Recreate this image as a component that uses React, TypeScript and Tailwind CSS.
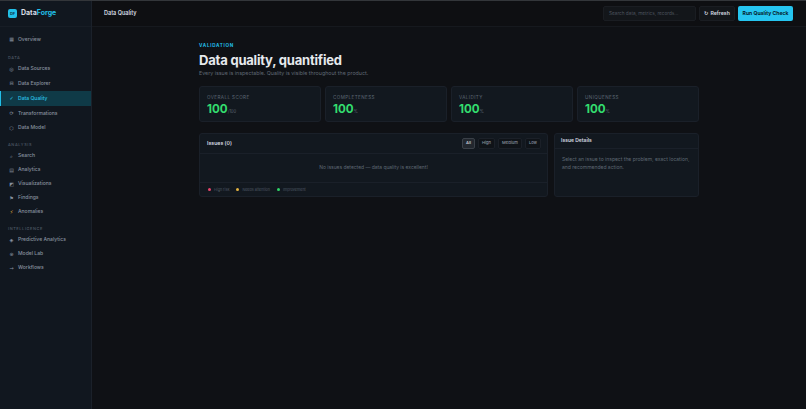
import React from 'react';

const inter = { fontFamily: 'Inter, "Noto Sans", sans-serif' };

interface NavItem {
  label: string;
  icon: string;
  active?: boolean;
  iconClass?: string;
}

const overview: NavItem[] = [{ label: 'Overview', icon: '▦' }];
const data: NavItem[] = [
  { label: 'Data Sources', icon: '◎' },
  { label: 'Data Explorer', icon: '⊟' },
  { label: 'Data Quality', icon: '✓', active: true },
  { label: 'Transformations', icon: '⟳' },
  { label: 'Data Model', icon: '⬡' },
];
const analysis: NavItem[] = [
  { label: 'Search', icon: '⌕' },
  { label: 'Analytics', icon: '▤' },
  { label: 'Visualizations', icon: '◩' },
  { label: 'Findings', icon: '⚑' },
  { label: 'Anomalies', icon: '⚡', iconClass: 'text-[#e3b341]' },
];
const intelligence: NavItem[] = [
  { label: 'Predictive Analytics', icon: '◈' },
  { label: 'Model Lab', icon: '⊛' },
  { label: 'Workflows', icon: '→' },
];

function NavRow({ item, tight }: { item: NavItem; tight?: boolean }) {
  return (
    <div
      className={`flex items-center gap-[4px] pl-[8px] text-[5.05px] font-medium border-l ${tight ? 'h-[14px]' : 'h-[14.75px]'} ${
        item.active ? 'border-[#22bfe8] bg-[#0f3a47] text-[#2cc3e8]' : 'border-transparent text-[#87919f]'
      }`}
    >
      <span className={`w-[5px] text-center text-[5px] leading-none ${item.iconClass ?? ''}`} style={{ fontFamily: '"DejaVu Sans", sans-serif' }}>
        {item.icon}
      </span>
      <span>{item.label}</span>
    </div>
  );
}

function SectionLabel({ children }: { children: React.ReactNode }) {
  return <div className="h-[11px] pl-[8px] pt-[4px] text-[3.9px] font-medium leading-[5px] tracking-[0.6px] text-[#4f5966]">{children}</div>;
}

function Stat({ label, unit }: { label: string; unit: string }) {
  return (
    <div className="h-[36px] flex-1 rounded-[3px] border border-[#1a2029] bg-[#12181f] px-[7px] pt-[8px]">
      <div className="text-[4.6px] leading-[6px] tracking-[0.4px] text-[#5c6673]">{label}</div>
      <div className="mt-[1px] flex items-baseline text-[#33dd6e]">
        <span className="text-[11.6px] font-bold leading-[14px]">100</span>
        <span className="text-[4.2px] text-[#5c6673]">{unit}</span>
      </div>
    </div>
  );
}

function Filter({ label, active }: { label: string; active?: boolean }) {
  return (
    <span
      className={`flex h-[11px] items-center rounded-[2px] border px-[3px] text-[4.1px] font-medium ${
        active ? 'border-[#3a4048] bg-[#22272e] text-[#d5dae0]' : 'border-[#1b2028] bg-[#0f1318] text-[#8a94a0]'
      }`}
    >
      {label}
    </span>
  );
}

function Legend({ color, label }: { color: string; label: string }) {
  return (
    <span className="flex items-center gap-[3px]">
      <span className={`h-[3px] w-[3px] rounded-full ${color}`} />
      <span>{label}</span>
    </span>
  );
}

export default function App() {
  return (
    <div className="flex h-[409px] w-[806px] flex-col overflow-hidden bg-[#0f1115]" style={inter}>
      <div className="h-px shrink-0 bg-[#33363a]" />
      <div className="flex min-h-0 flex-1">
        {/* Sidebar */}
        <aside className="w-[92px] shrink-0 border-r border-[#1b212a] bg-[#11171f]">
          <div className="flex h-[26px] items-center gap-[4px] border-b border-[#171d25] pl-[8px]">
            <span className="flex h-[9px] w-[9px] items-center justify-center rounded-[2px] bg-[#22bfe8] text-[4px] font-bold text-[#0d3a48]">DF</span>
            <span className="text-[7px] font-bold text-[#d9dee4]">
              Data<span className="text-[#22bfe8]">Forge</span>
            </span>
          </div>
          <div className="pt-[5.5px]">
            {overview.map((i) => <NavRow key={i.label} item={i} />)}
          </div>
          <div className="pt-[3.5px]">
            <SectionLabel>DATA</SectionLabel>
            {data.map((i) => <NavRow key={i.label} item={i} />)}
          </div>
          <div className="pt-[2.6px]">
            <SectionLabel>ANALYSIS</SectionLabel>
            {analysis.map((i) => <NavRow key={i.label} item={i} tight />)}
          </div>
          <div className="pt-[3px]">
            <SectionLabel>INTELLIGENCE</SectionLabel>
            {intelligence.map((i) => <NavRow key={i.label} item={i} tight />)}
          </div>
        </aside>

        <div className="flex min-w-0 flex-1 flex-col">
          {/* Top bar */}
          <header className="flex h-[26px] shrink-0 items-center border-b border-[#16191e] bg-[#0e0f12] pl-[12px] pr-[13px]">
            <span className="text-[5.5px] font-semibold text-[#d5dae0]">Data Quality</span>
            <div className="ml-auto flex items-center gap-[3px]">
              <div className="flex h-[15px] w-[93px] items-center rounded-[2px] border border-[#1a1d22] bg-[#13161a] pl-[5px] text-[4.7px] text-[#4d545e]">
                Search data, metrics, records...
              </div>
              <div className="flex h-[15px] w-[36px] items-center justify-center gap-[2px] rounded-[2px] border border-[#1a1d22] bg-[#13161a] text-[5.2px] font-semibold text-[#d5dae0]">
                <span style={{ fontFamily: '"DejaVu Sans", sans-serif' }}>↻</span> Refresh
              </div>
              <div className="flex h-[15px] w-[55px] items-center justify-center rounded-[2px] bg-[#25c5f0] text-[5.1px] font-bold text-[#06222c]">
                Run Quality Check
              </div>
            </div>
          </header>

          {/* Content */}
          <main className="w-[500px] self-center pt-[16px]">
            <div className="text-[4.6px] font-bold leading-[6px] tracking-[0.7px] text-[#22bfe8]">VALIDATION</div>
            <h1 className="mt-[2px] text-[13px] font-bold leading-[18px] tracking-[-0.2px] text-[#e6e9ed]">Data quality, quantified</h1>
            <p className="mt-[1px] text-[5.3px] leading-[7px] text-[#5f6874]">Every issue is inspectable. Quality is visible throughout the product.</p>

            <div className="mt-[9px] flex gap-[4px]">
              <Stat label="OVERALL SCORE" unit="/100" />
              <Stat label="COMPLETENESS" unit="%" />
              <Stat label="VALIDITY" unit="%" />
              <Stat label="UNIQUENESS" unit="%" />
            </div>

            <div className="mt-[11px] flex gap-[6px]">
              <section className="h-[64px] flex-1 rounded-[3px] border border-[#1a2029] bg-[#12181f]">
                <div className="flex h-[20px] items-center justify-between border-b border-[#1a2029] pl-[7px] pr-[6px]">
                  <span className="text-[5.2px] font-semibold text-[#d5dae0]">Issues (0)</span>
                  <div className="flex gap-[3px]">
                    <Filter label="All" active />
                    <Filter label="High" />
                    <Filter label="Medium" />
                    <Filter label="Low" />
                  </div>
                </div>
                <div className="flex h-[29px] items-center justify-center border-b border-[#1a2029] text-[4.95px] text-[#5f6874]">
                  No issues detected — data quality is excellent!
                </div>
                <div className="flex h-[13px] items-center gap-[7px] pl-[8px] text-[3.7px] text-[#4f5966]">
                  <Legend color="bg-[#e8456b]" label="High risk" />
                  <Legend color="bg-[#e3b341]" label="Needs attention" />
                  <Legend color="bg-[#2fd568]" label="Improvement" />
                </div>
              </section>

              <section className="h-[64px] w-[145px] shrink-0 rounded-[3px] border border-[#1a2029] bg-[#12181f]">
                <div className="flex h-[15px] items-center border-b border-[#1a2029] pl-[6px] text-[5px] font-semibold text-[#d5dae0]">Issue Details</div>
                <p className="px-[7px] pt-[6px] text-[5px] leading-[8px] text-[#5f6874]">
                  Select an issue to inspect the problem, exact location, and recommended action.
                </p>
              </section>
            </div>
          </main>
        </div>
      </div>
    </div>
  );
}
